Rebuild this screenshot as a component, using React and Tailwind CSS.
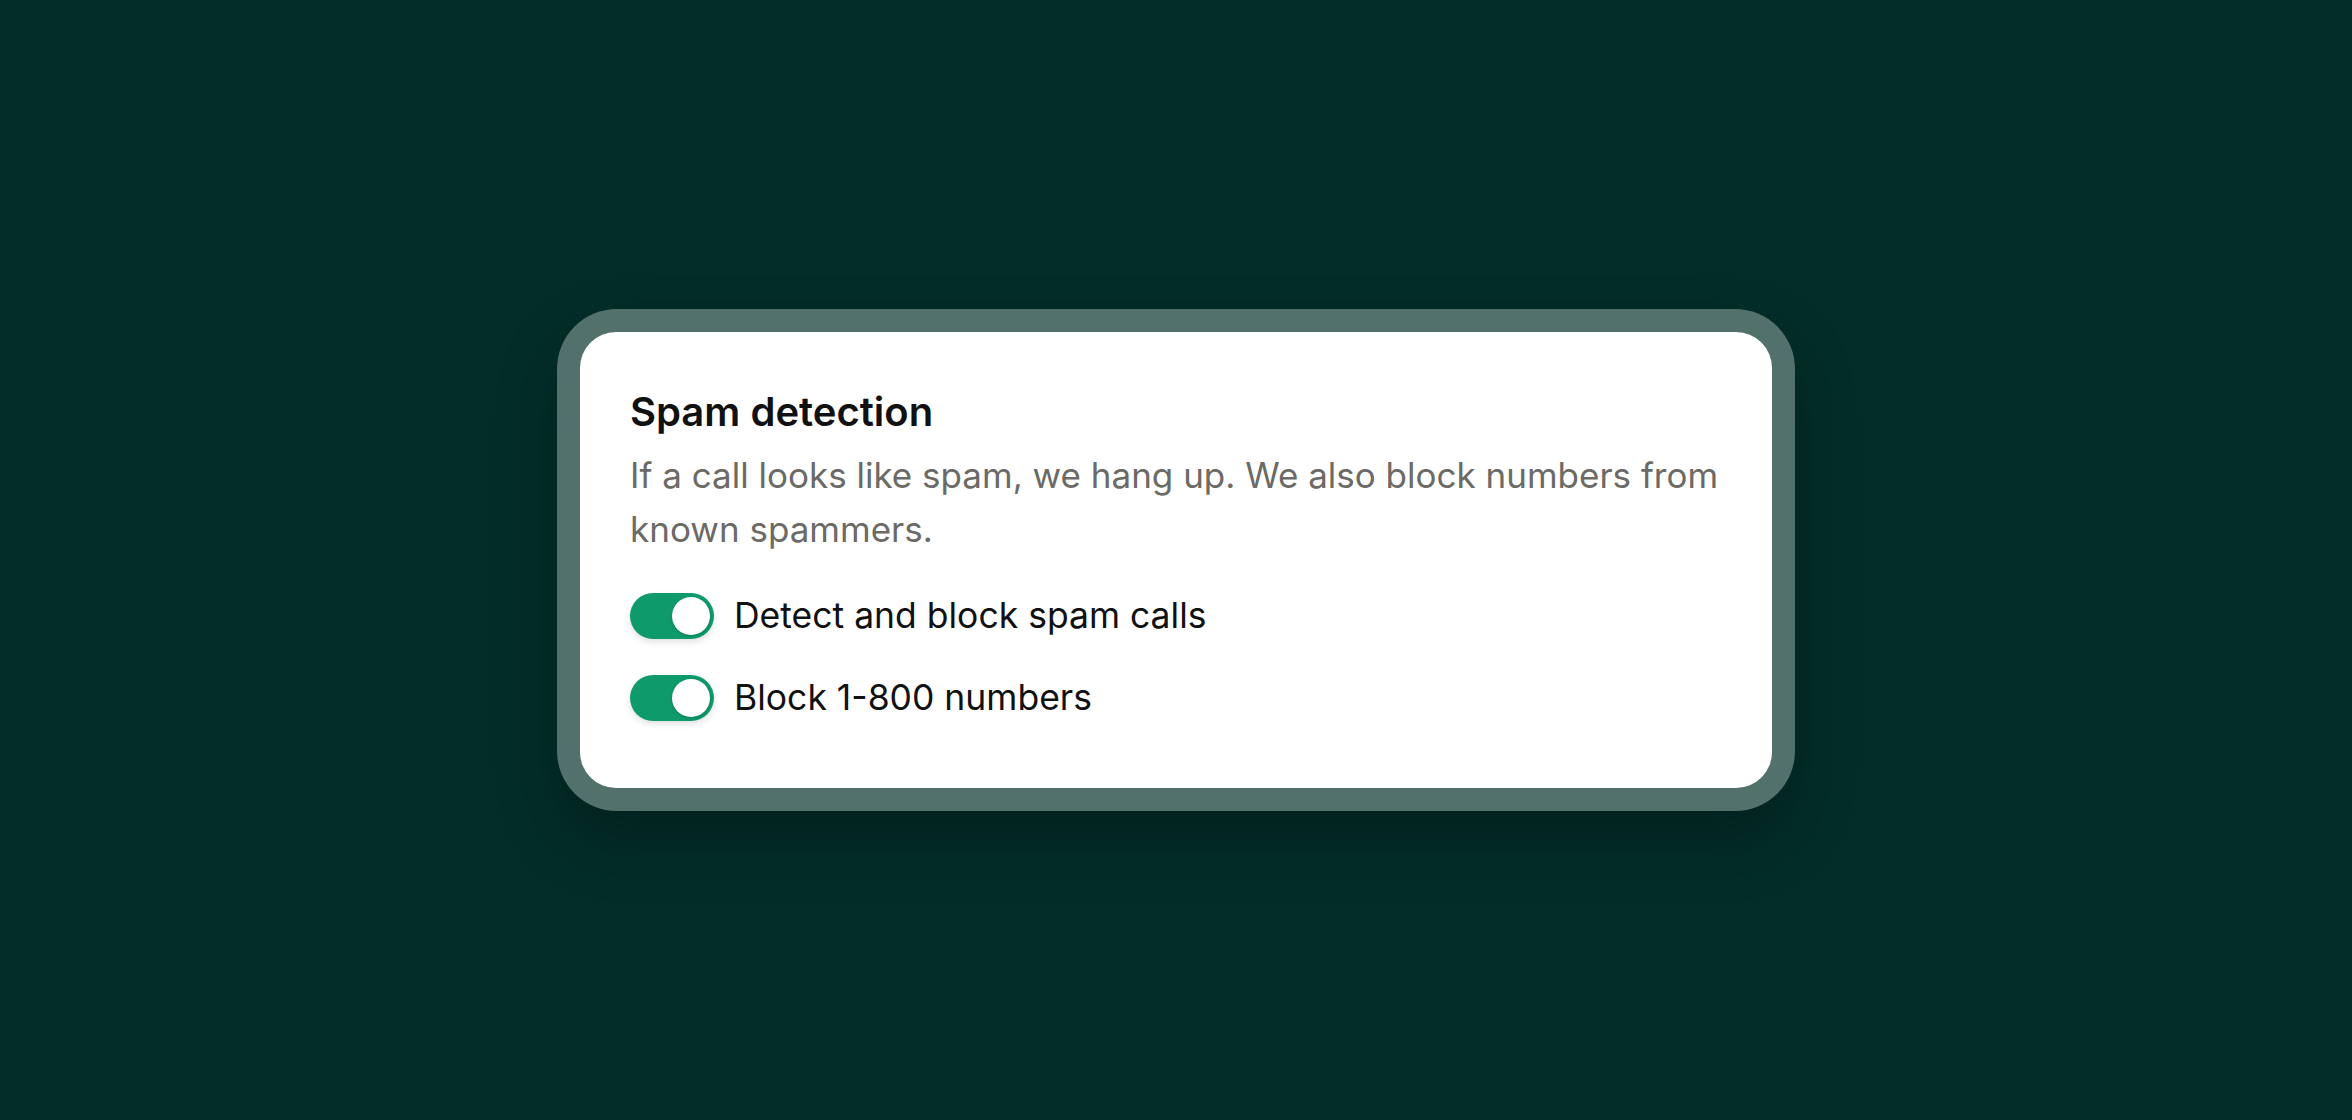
const rows = ['Detect and block spam calls', 'Block 1-800 numbers'];

function Toggle() {
  return (
    <div className="flex h-[46px] w-[84px] shrink-0 items-center justify-end rounded-full bg-[#0e9a6a] pr-[4px] shadow-[0_3px_6px_rgba(0,0,0,0.12)]">
      <div className="h-[38px] w-[38px] rounded-full bg-white shadow-[0_1px_3px_rgba(0,0,0,0.2)]" />
    </div>
  );
}

export default function App() {
  return (
    <div className="flex h-[1120px] w-full items-center justify-center bg-[#032d29] font-['Inter',sans-serif]">
      <div className="w-[1238px] rounded-[60px] bg-[#52716a] p-[23px] shadow-[0_30px_60px_rgba(0,0,0,0.25)]">
        <div className="rounded-[36px] bg-white px-[50px] pb-[67px] pt-[56px]">
          <h2 className="text-[40px] font-semibold leading-[48px] text-[#111111]">Spam detection</h2>
          <p className="mt-[12px] text-[35px] leading-[54px] text-[#6b6a67]">
            If a call looks like spam, we hang up. We also block numbers from known spammers.
          </p>
          <div className="mt-[37px] flex flex-col gap-[36px]">
            {rows.map((label) => (
              <div key={label} className="flex items-center gap-[20px]">
                <Toggle />
                <span className="text-[35.5px] leading-[46px] text-[#111111]">{label}</span>
              </div>
            ))}
          </div>
        </div>
      </div>
    </div>
  );
}
